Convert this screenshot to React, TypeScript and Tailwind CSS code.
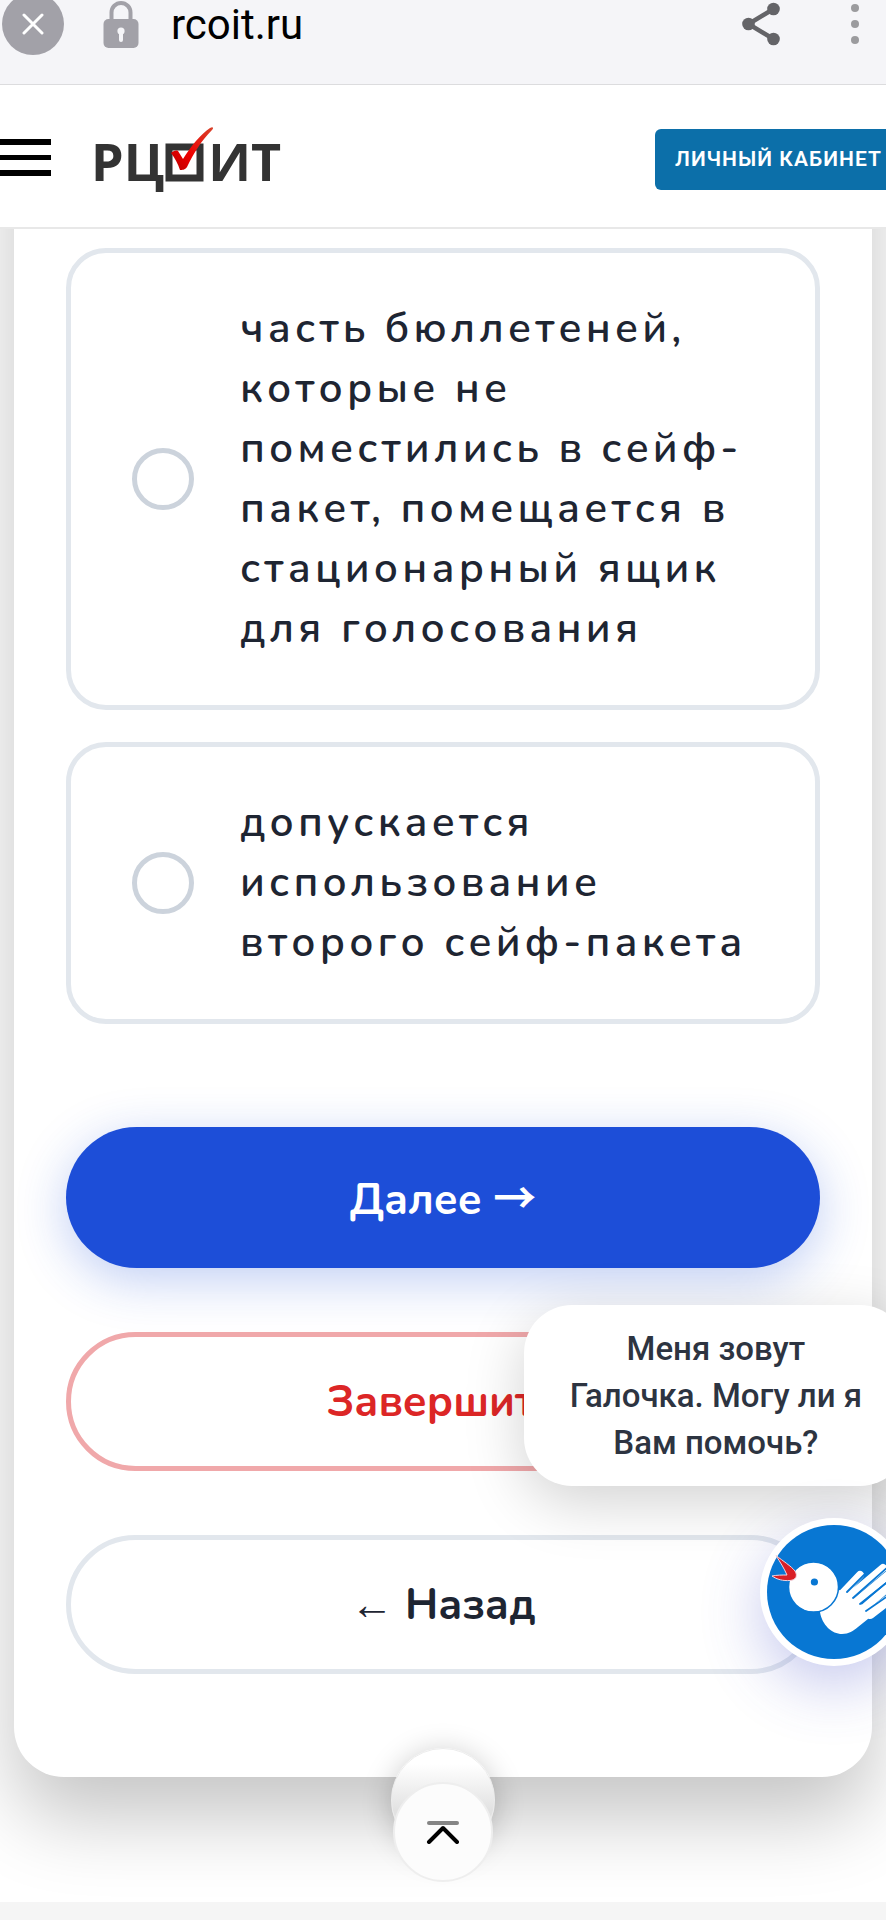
import { useState } from "react";

const answers = [
  {
    id: "part",
    text: "часть бюллетеней, которые не поместились в сейф-пакет, помещается в стационарный ящик для голосования",
  },
  { id: "second", text: "допускается использование второго сейф-пакета" },
];

function BrowserBar() {
  return (
    <div className="flex h-[85px] items-center border-b border-[#dcdcde] bg-[#f5f5f8] pr-[26px] pb-[37px] pl-[2px]">
      <button
        aria-label="Закрыть"
        className="grid size-[62px] shrink-0 place-items-center rounded-full bg-[#a2a1a8]"
        type="button"
      >
        <svg className="size-[22px]" viewBox="0 0 22 22" fill="none" stroke="#fff" strokeWidth="3" strokeLinecap="round">
          <path d="M2 2l18 18M20 2L2 20" />
        </svg>
      </button>

      <svg className="ml-[39px] h-12 w-9 shrink-0" viewBox="0 0 36 48" fill="none">
        <path d="M8.500 20V12.500a9.500 9.500 0 0 1 19 0V20" stroke="#a2a1a8" strokeWidth="4" />
        <rect x="0.500" y="19" width="35" height="29" rx="5" fill="#a2a1a8" />
        <path d="M18 31v9" stroke="#f5f5f8" strokeWidth="4" strokeLinecap="round" />
        <circle cx="18" cy="31" r="3.600" fill="#f5f5f8" />
      </svg>

      <span className="ml-8 flex-1 pt-[2px] font-[Roboto,sans-serif] text-[42px] leading-[46px] text-black">
        rcoit.ru
      </span>

      <button aria-label="Поделиться" type="button">
        <svg className="h-11 w-[38px]" viewBox="0 0 38 44" fill="#646468">
          <path d="M31.500 7L6.500 22l25 15" fill="none" stroke="#646468" strokeWidth="4.500" />
          <circle cx="31.500" cy="7" r="6.300" />
          <circle cx="6.500" cy="22" r="6.300" />
          <circle cx="31.500" cy="37" r="6.300" />
        </svg>
      </button>
      <button aria-label="Меню" className="ml-[70px]" type="button">
        <svg className="h-11 w-[10px]" viewBox="0 0 10 44" fill="#9b9b9e">
          <circle cx="5" cy="6" r="4" />
          <circle cx="5" cy="22" r="4" />
          <circle cx="5" cy="38" r="4" />
        </svg>
      </button>
    </div>
  );
}

function Logo() {
  return (
    <a
      aria-label="РЦОИТ"
      className="flex items-center font-['Open_Sans',sans-serif] text-[52px] leading-[60px] font-bold text-[#333]"
      href="#"
    >
      <span>РЦ</span>
      <svg className="h-[60px] w-[42px] overflow-visible" viewBox="0 0 42 60">
        <defs>
          <linearGradient id="tick" x1="0" y1="1" x2="1" y2="0">
            <stop offset="0" stopColor="#b80000" />
            <stop offset="0.400" stopColor="#ee0000" />
            <stop offset="1" stopColor="#d8442c" />
          </linearGradient>
        </defs>
        <rect x="5" y="16" width="31" height="31" fill="none" stroke="#333" strokeWidth="7" />
        <path
          d="M7 22c2-2 5-3 7-2l5 8C27 15 36 4 46-3c3-2 4 0 2 2C37 10 30 22 23 36c-2 3-5 3-7 3C14 33 11 27 7 22Z"
          fill="url(#tick)"
        />
      </svg>
      <span className="ml-[2px]">ИТ</span>
    </a>
  );
}

function SiteHeader() {
  return (
    <header className="flex h-36 items-center border-b-2 border-[#e8e8e8] bg-white pt-[2px]">
      <button aria-label="Открыть меню" className="flex w-[51px] flex-col gap-[10px]" type="button">
        <span className="h-[6px] bg-black" />
        <span className="h-[5px] bg-black" />
        <span className="h-[6px] bg-black" />
      </button>
      <div className="ml-10 flex-1 pt-2">
        <Logo />
      </div>
      <a
        className="mt-1 -mr-4 rounded-md bg-[#0c6fa9] px-5 font-[Roboto,sans-serif] text-[21px] leading-[61px] font-semibold tracking-wider whitespace-nowrap text-white"
        href="#"
      >
        ЛИЧНЫЙ КАБИНЕТ
      </a>
    </header>
  );
}

function ChatWidget() {
  return (
    <div className="absolute top-[1305px] -right-[22px] flex flex-col items-end gap-8">
      <p className="rounded-[48px] bg-white px-[46px] py-5 text-center font-[Roboto,sans-serif] text-[33px] leading-[47px] font-medium text-[#2d3441] shadow-[0_16px_60px_rgba(0,0,0,0.18)]">
        Меня зовут
        <br />
        Галочка. Могу ли я
        <br />
        Вам помочь?
      </p>
      <button
        aria-label="Открыть чат"
        className="size-[148px] rounded-full bg-white shadow-[0_20px_60px_rgba(70,80,200,0.3)]"
        type="button"
      >
        <svg className="size-full" viewBox="0 0 148 148">
          <circle cx="74" cy="74" r="67" fill="#0877d3" />
          <path
            d="M60 94C62 107 72 116 82 116c7 0 11-3 16-7L128 85 108 92 88 75 79 72Z"
            fill="#fff"
          />
          <g stroke="#fff" strokeWidth="8" strokeLinecap="round">
            <path d="M82 76l18-19M91 77l32-27M97 83l37-31M104 90l34-29" />
            <path d="M110 96l25-19" strokeWidth="10" />
          </g>
          <g stroke="#0877d3" strokeWidth="1.800" strokeLinecap="round">
            <path d="M87 74l18-18M93 80l36-32M100 86l36-29M106 93l32-22" />
          </g>
          <circle cx="53.500" cy="69" r="25" fill="#fff" stroke="#0877d3" strokeWidth="1.500" />
          <circle cx="54.400" cy="64" r="3.600" fill="#0877d3" />
          <path
            d="M16 37.500C23 43 31 48 35 53c3 5 1 9-5 9.500-7 .5-13-1-18-4.500 5-1 10-1 15-1C24 50 20 44 16 37.500Z"
            fill="#d91f26"
            stroke="#f3d5dd"
            strokeWidth="1"
          />
        </svg>
      </button>
    </div>
  );
}

export default function App() {
  const [answer, setAnswer] = useState("");

  return (
    <div className="relative flex min-h-screen flex-col overflow-hidden bg-white font-[Nunito,'Open_Sans',sans-serif] text-[#1e2532]">
      <BrowserBar />
      <SiteHeader />

      <main className="overflow-hidden px-[14px] pb-[125px]">
        {/* the card is scrolled under the header */}
        <div className="-mt-[200px] rounded-[50px] bg-white px-[52px] pt-[219px] pb-[103px] shadow-[0_40px_80px_rgba(0,0,0,0.23)]">
          <form className="flex flex-col" onSubmit={(event) => event.preventDefault()}>
            <div className="flex flex-col gap-8">
              {answers.map((item) => (
                <label
                  className="flex items-center rounded-[40px] border-[5px] border-[#e2e7ed] px-[61px] py-[46px] text-[42px] leading-[60px] font-semibold tracking-widest"
                  key={item.id}
                >
                  <input
                    checked={answer === item.id}
                    className="mr-[46px] size-[62px] shrink-0 appearance-none rounded-full border-[5px] border-[#ccd3dc] checked:border-[18px] checked:border-[#1d4ed8]"
                    name="answer"
                    onChange={() => setAnswer(item.id)}
                    type="radio"
                  />
                  <span>{item.text}</span>
                </label>
              ))}
            </div>

            <div className="mt-[103px] flex flex-col gap-16 text-[43px] leading-[60px] font-bold">
              <button
                className="h-[141px] rounded-full bg-[#1d4ed8] text-white shadow-[0_12px_50px_rgba(29,78,216,0.28)]"
                type="submit"
              >
                Далее <span className="font-['Noto_Sans_CJK_SC',sans-serif]">→</span>
              </button>
              <button className="h-[139px] rounded-full border-[5px] border-[#f0a8aa] text-[#dc2626]" type="button">
                Завершить
              </button>
              <button className="h-[139px] rounded-full border-[5px] border-[#e2e7ed]" type="button">
                ← Назад
              </button>
            </div>
          </form>
        </div>
      </main>

      <footer className="min-h-[18px] flex-1 bg-[#f5f5f5]" />

      <ChatWidget />

      <button
        aria-label="Наверх"
        className="absolute top-[1748px] left-1/2 h-[134px] w-[104px] -translate-x-1/2"
        type="button"
      >
        <span className="absolute inset-x-0 top-0 h-[104px] rounded-full border border-[#ececec] bg-linear-to-b from-white from-15% to-[#e2e2e2] to-60% shadow-[0_4px_30px_rgba(0,0,0,0.22)]" />
        <span className="absolute inset-x-[2px] bottom-0 grid h-[100px] place-items-center rounded-full border-2 border-[#eee] bg-[#fcfcfc]">
          <svg className="h-6 w-9" viewBox="0 0 36 24" fill="none" strokeWidth="4" strokeLinecap="round" strokeLinejoin="round">
            <path d="M4 3h28" stroke="#858585" />
            <path d="M4 22L18 8l14 14" stroke="#000" />
          </svg>
        </span>
      </button>
    </div>
  );
}
